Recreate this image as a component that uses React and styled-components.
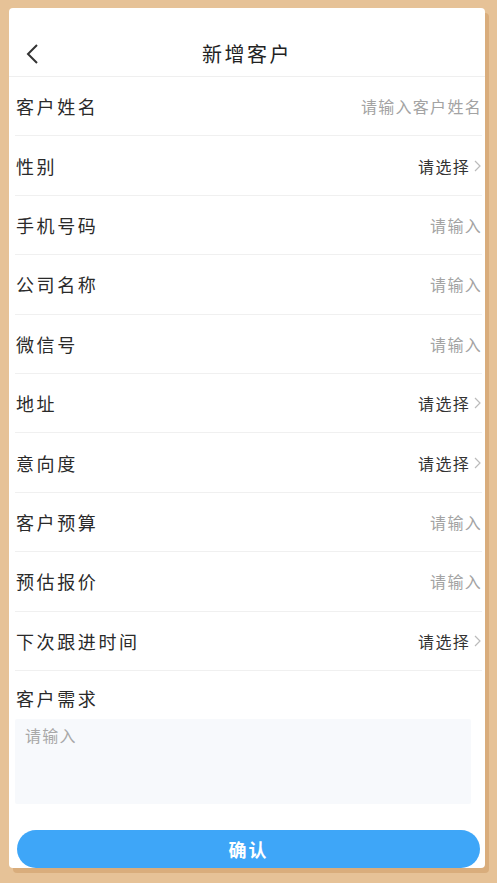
import React from "react";
import styled, { createGlobalStyle } from "styled-components";

const Global = createGlobalStyle`
  html, body { margin: 0; padding: 0; background: #e6c297; }
  body { font-family: "Noto Sans CJK SC", "Noto Sans", sans-serif; }
  * { box-sizing: border-box; }
`;

const Page = styled.div`
  width: 497px;
  height: 883px;
  padding: 8px 12px 0 9px;
  overflow: hidden;
`;

const Card = styled.div`
  width: 476px;
  height: 860px;
  background: #fff;
  border-radius: 4px;
  box-shadow: 4px 5px 0 #d9ad7c;
  display: flex;
  flex-direction: column;
  overflow: hidden;
`;

const StatusBar = styled.div`
  height: 24px;
`;

const NavBar = styled.div`
  height: 47px;
  display: grid;
  grid-template-columns: 60px 1fr 60px;
  align-items: center;
  border-bottom: 1px solid #efefef;
`;

const BackButton = styled.div`
  display: flex;
  align-items: center;
  padding-left: 16px;
  height: 100%;
`;

const Title = styled.div`
  text-align: center;
  font-size: 20px;
  letter-spacing: 2.5px;
  color: #222;
  font-weight: 400;
`;

const List = styled.div`
  padding: 0 3px 0 6px;
`;

const Row = styled.div`
  height: 59.4px;
  display: flex;
  align-items: center;
  justify-content: space-between;
  border-bottom: 1px solid #f0f0f0;
  padding-left: 1px;
`;

const Label = styled.div`
  font-size: 18px;
  letter-spacing: 2.6px;
  color: #2a2a2a;
`;

const Value = styled.div`
  display: flex;
  align-items: center;
  font-size: 16px;
  letter-spacing: 1.3px;
  color: ${(p) => (p.$select ? "#333" : "#a3a3a3")};
`;

const Chevron = styled.svg`
  margin-left: 3px;
`;

const Section = styled.div`
  padding: 14px 14px 0 6px;
`;

const AreaLabel = styled(Label)`
  padding-left: 1px;
  height: 26px;
  line-height: 26px;
`;

const TextArea = styled.div`
  margin-top: 8px;
  height: 85px;
  background: #f7f9fc;
  border-radius: 2px;
  padding: 4px 10px;
  font-size: 16px;
  letter-spacing: 1.3px;
  color: #a8a8a8;
`;

const Footer = styled.div`
  padding: 26px 5px 0 8px;
`;

const Button = styled.div`
  height: 38px;
  border-radius: 19px;
  background: #3ea6f8;
  color: #fff;
  font-size: 18px;
  font-weight: 700;
  letter-spacing: 2px;
  display: flex;
  align-items: center;
  justify-content: center;
`;

const rows = [
  { label: "客户姓名", value: "请输入客户姓名" },
  { label: "性别", value: "请选择", select: true },
  { label: "手机号码", value: "请输入" },
  { label: "公司名称", value: "请输入" },
  { label: "微信号", value: "请输入" },
  { label: "地址", value: "请选择", select: true },
  { label: "意向度", value: "请选择", select: true },
  { label: "客户预算", value: "请输入" },
  { label: "预估报价", value: "请输入" },
  { label: "下次跟进时间", value: "请选择", select: true },
];

export default function App() {
  return (
    <Page>
      <Global />
      <Card>
        <StatusBar />
        <NavBar>
          <BackButton>
            <svg width="14" height="22" viewBox="0 0 14 22">
              <path d="M12 2 L3 11 L12 20" fill="none" stroke="#333" strokeWidth="2" />
            </svg>
          </BackButton>
          <Title>新增客户</Title>
          <div />
        </NavBar>
        <List>
          {rows.map((r) => (
            <Row key={r.label}>
              <Label>{r.label}</Label>
              <Value $select={r.select}>
                {r.value}
                {r.select && (
                  <Chevron width="9" height="14" viewBox="0 0 9 14">
                    <path d="M2 2 L7 7 L2 12" fill="none" stroke="#bbb" strokeWidth="1.2" />
                  </Chevron>
                )}
              </Value>
            </Row>
          ))}
        </List>
        <Section>
          <AreaLabel>客户需求</AreaLabel>
          <TextArea>请输入</TextArea>
        </Section>
        <Footer>
          <Button>确认</Button>
        </Footer>
      </Card>
    </Page>
  );
}
